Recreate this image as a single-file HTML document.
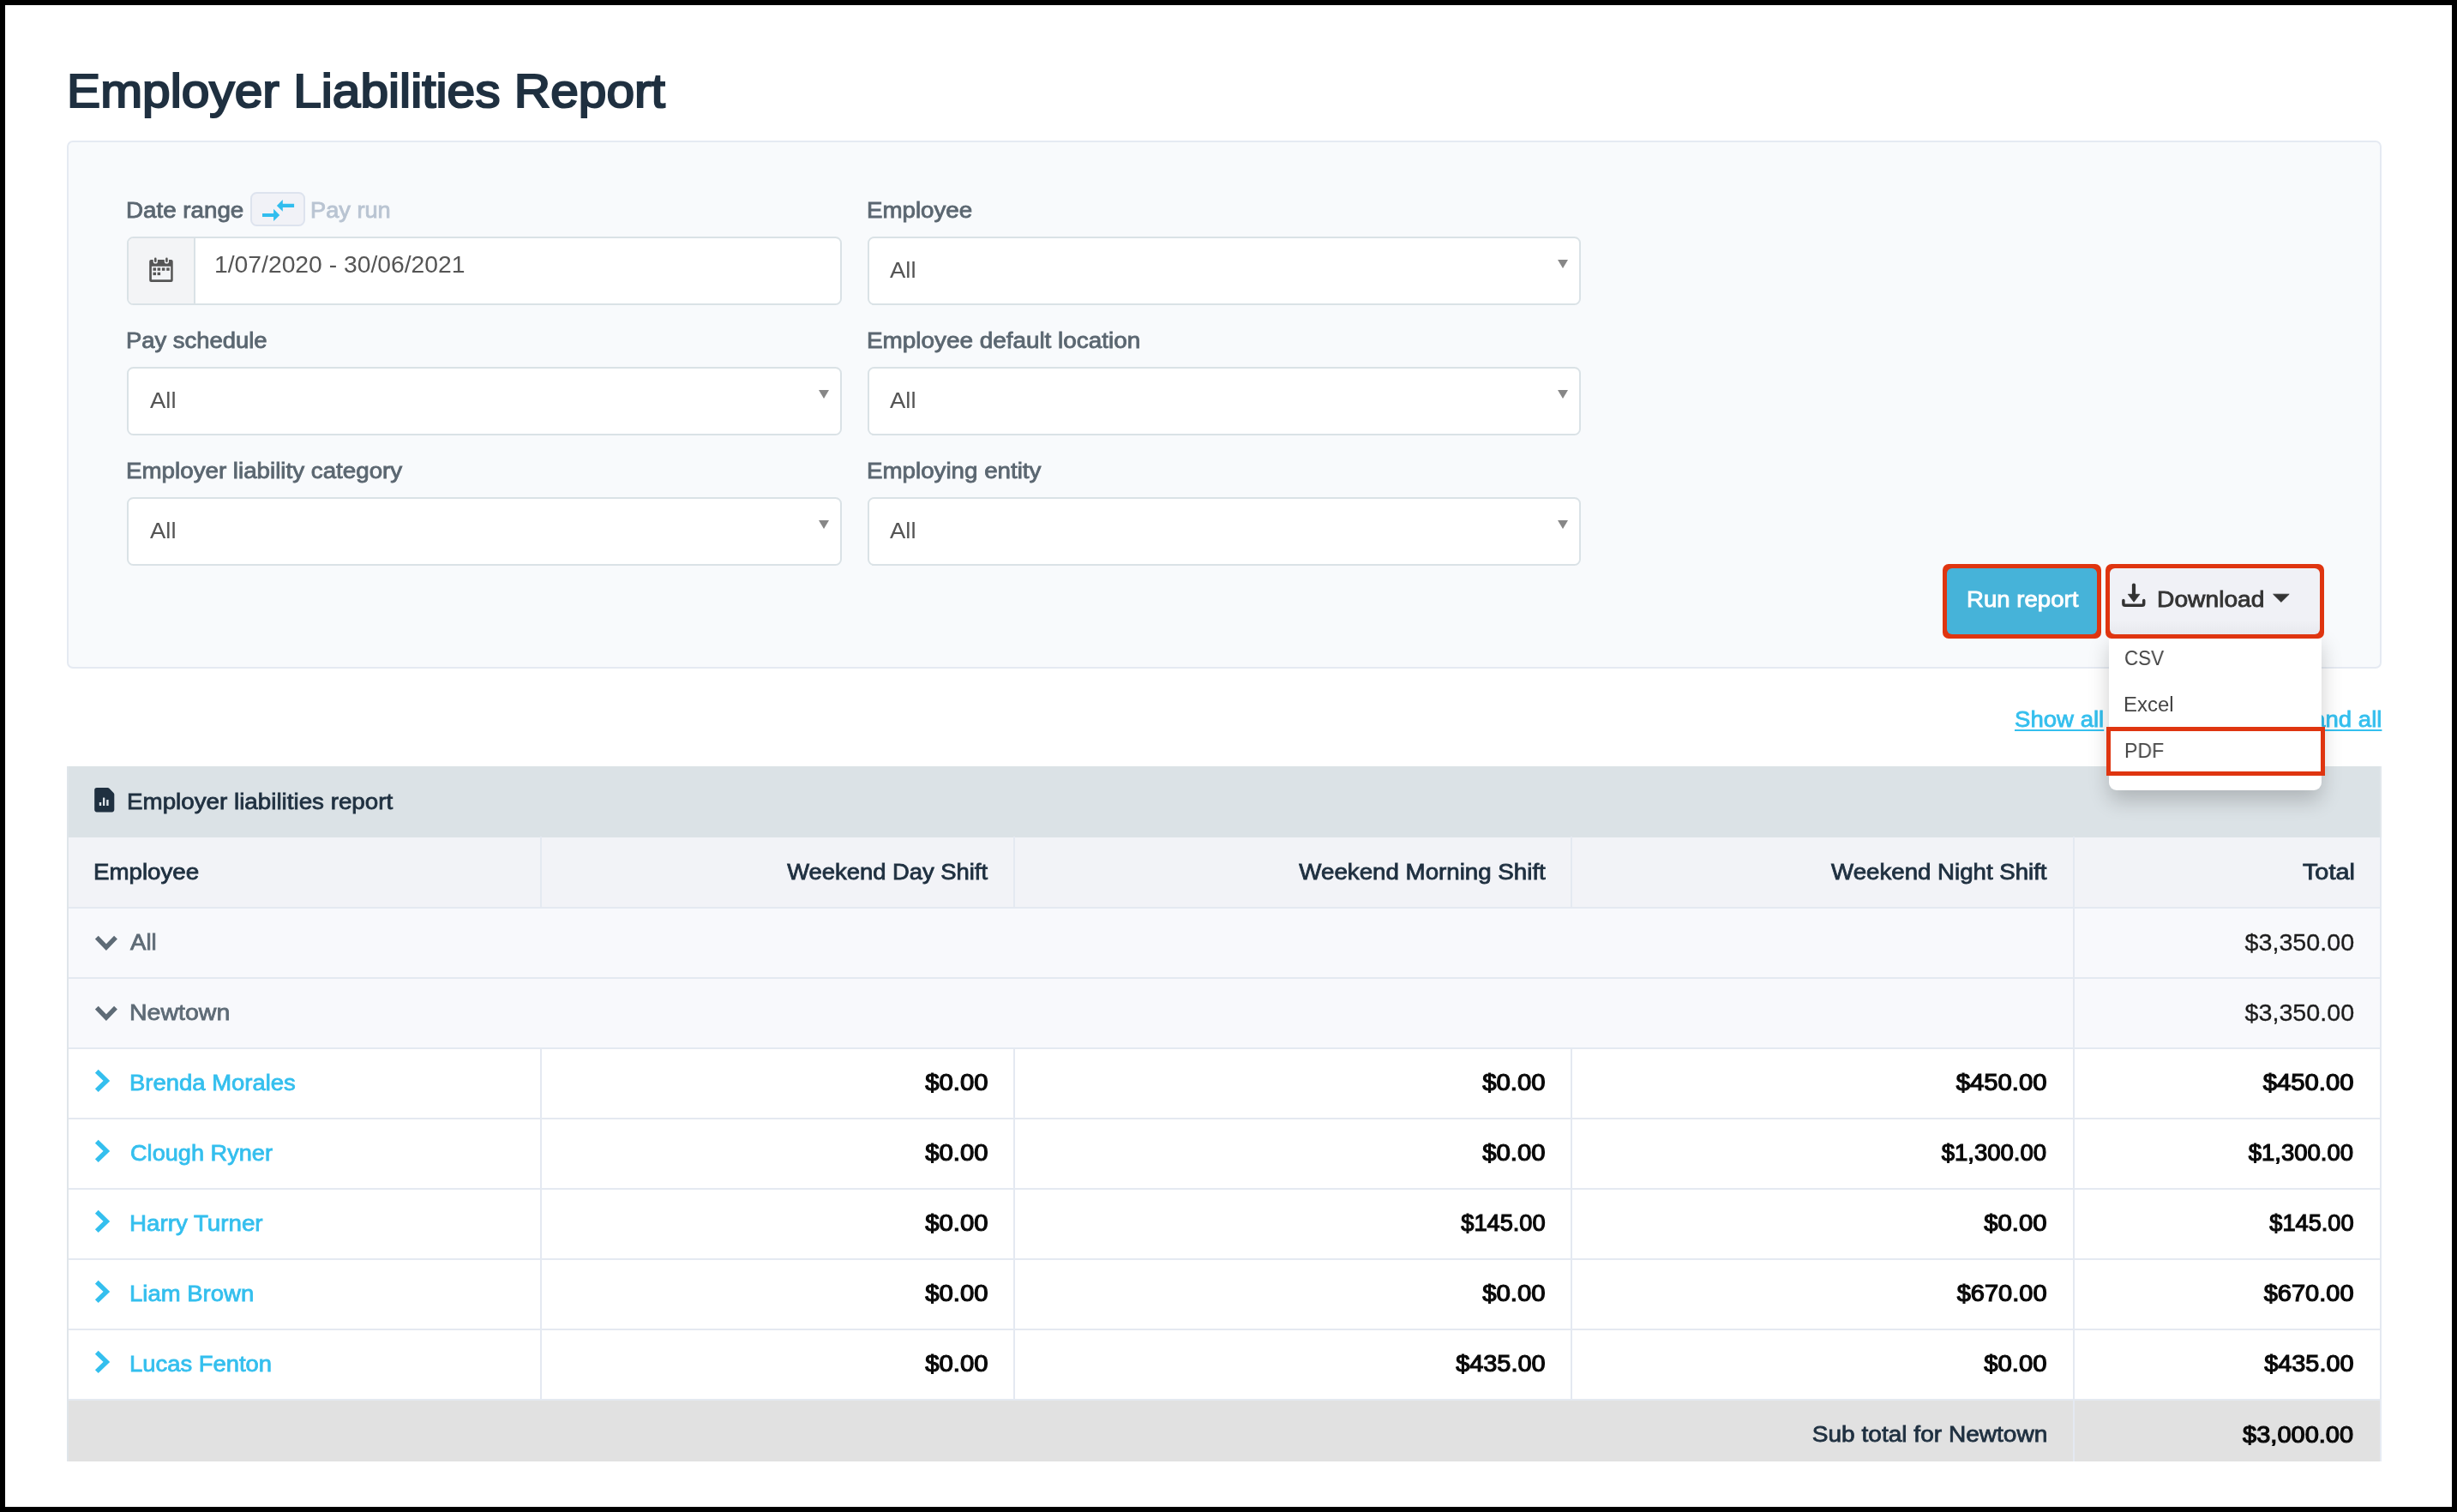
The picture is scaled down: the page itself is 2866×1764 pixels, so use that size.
<!DOCTYPE html>
<html><head><meta charset="utf-8"><title>Employer Liabilities Report</title>
<style>
*{box-sizing:border-box;margin:0;padding:0}
html,body{width:2866px;height:1764px;overflow:hidden;background:#fff}
body{position:relative;font-family:"Liberation Sans",sans-serif}
.a{position:absolute}
.t{position:absolute;white-space:nowrap;line-height:1;will-change:transform;font-family:"Liberation Sans",sans-serif}
#frame{position:absolute;left:0;top:0;width:2866px;height:1764px;border:6px solid #000;z-index:100}
.panel{left:78px;top:164px;width:2700px;height:616px;border:2px solid #e5eaf2;border-radius:7px;background:#f8fafc}
.inp{height:80px;border:2px solid #dae2e6;border-radius:7.5px;background:#fff}
.caret{width:0;height:0;border-left:6.2px solid transparent;border-right:6.2px solid transparent;border-top:10.4px solid #878787}
.hl{background:#e4e9f1}
</style></head><body>
<div id="frame"></div>
<div class="a panel"></div>

<!-- toggle -->
<div class="a" style="left:292px;top:224px;width:64px;height:40px;border:2px solid #dde3ee;border-radius:7.5px;background:#f1f2f7"></div>
<svg class="a" style="left:292px;top:224px" width="64" height="40" viewBox="292 224 64 40">
<path fill="#31bdee" d="M322.9 239.9 L329.8 232.9 V237.8 H343.1 V242 H329.8 V246.7 Z"/>
<path fill="#31bdee" d="M326.2 250.9 L319.1 243.8 V248.9 H306 V252.9 H319.1 V258.1 Z"/>
</svg>

<!-- date input -->
<div class="a inp" style="left:148px;top:276px;width:834px"></div>
<div class="a" style="left:150px;top:278px;width:78px;height:76px;background:#f3f4f6;border-right:2px solid #dae2e6;border-radius:5.5px 0 0 5.5px"></div>
<svg class="a" style="left:170px;top:296.6px" width="36" height="36" viewBox="170 296 36 36">
<g fill="#555">
<path d="M176.2 302.1 H199.7 Q201.7 302.1 201.7 304.1 V325.9 Q201.7 327.9 199.7 327.9 H176.2 Q174.2 327.9 174.2 325.9 V304.1 Q174.2 302.1 176.2 302.1 Z M176.9 309.8 V325.2 H199.2 V309.8 Z" fill-rule="evenodd"/>
<rect x="178.5" y="311.4" width="3.5" height="3.4"/><rect x="183.6" y="311.4" width="3.5" height="3.4"/><rect x="188.9" y="311.4" width="3.5" height="3.4"/><rect x="194.2" y="311.4" width="3.5" height="3.4"/>
<rect x="178.5" y="316.7" width="3.5" height="3.4"/><rect x="183.6" y="316.7" width="3.5" height="3.4"/>
</g>
<g fill="#f3f4f6"><rect x="178.7" y="300" width="5.2" height="6.6" rx="2.6"/><rect x="191.8" y="300" width="5.2" height="6.6" rx="2.6"/></g>
<g fill="#555"><rect x="180" y="299.6" width="2.6" height="5.4" rx="1.3"/><rect x="193.1" y="299.6" width="2.6" height="5.4" rx="1.3"/></g>
</svg>

<!-- selects -->
<div class="a inp" style="left:1012px;top:276px;width:832px"></div>
<div class="a inp" style="left:148px;top:428px;width:834px"></div>
<div class="a inp" style="left:1012px;top:428px;width:832px"></div>
<div class="a inp" style="left:148px;top:580px;width:834px"></div>
<div class="a inp" style="left:1012px;top:580px;width:832px"></div>
<div class="a caret" style="left:1816.8px;top:302.9px"></div>
<div class="a caret" style="left:954.6px;top:454.9px"></div>
<div class="a caret" style="left:1816.8px;top:454.9px"></div>
<div class="a caret" style="left:954.6px;top:606.9px"></div>
<div class="a caret" style="left:1816.8px;top:606.9px"></div>

<!-- buttons -->
<div class="a" style="left:2266px;top:658px;width:185px;height:87px;border-radius:7px;background:#df3510"></div>
<div class="a" style="left:2271px;top:663px;width:175px;height:77px;border-radius:6px;background:#46b3d9"></div>
<div class="a" style="left:2456px;top:658px;width:255px;height:87px;border-radius:7px;background:#df3510;z-index:12"></div>
<div class="a" style="left:2461px;top:663px;width:245px;height:77px;border-radius:6px;background:linear-gradient(#f0f1f6 78%,#e8e9ee);z-index:12"></div>
<svg class="a" style="left:2470px;top:676px;z-index:13" width="40" height="36" viewBox="2470 676 40 36">
<path d="M2476.9 700.4 V704.2 Q2476.9 706.3 2479 706.3 H2498.6 Q2500.7 706.3 2500.7 704.2 V700.4" fill="none" stroke="#333" stroke-width="3.5" stroke-linecap="round"/>
<path d="M2489 682.6 V695" fill="none" stroke="#333" stroke-width="4.2" stroke-linecap="round"/>
<path d="M2482.3 693.3 H2495.9 L2489.1 702.3 Z" fill="#333" stroke="#333" stroke-width="0.8" stroke-linejoin="round"/>
</svg>
<svg class="a" style="left:2648px;top:690px;z-index:13" width="26" height="16" viewBox="2648 690 26 16">
<path d="M2651.6 693.2 H2670.2 L2660.9 702.4 Z" fill="#333" stroke="#333" stroke-width="0.8" stroke-linejoin="round"/>
</svg>

<!-- dropdown -->
<div class="a" style="left:2460px;top:740px;width:248px;height:182px;background:#fff;border-radius:0 0 9px 9px;box-shadow:0 12px 24px rgba(0,0,0,.2);z-index:10"></div>
<div class="a" style="left:2457px;top:848px;width:255px;height:57px;border:5px solid #df3510;z-index:21"></div>

<!-- table -->
<div class="a" style="left:78px;top:894px;width:2700px;height:811px;background:#fff"></div>
<div class="a" style="left:78px;top:894px;width:2700px;height:83px;background:#dbe2e6"></div>
<div class="a" style="left:78px;top:977px;width:2700px;height:82px;background:#f2f3f7"></div>
<div class="a" style="left:78px;top:1059px;width:2700px;height:164px;background:#f8f9fc"></div>
<div class="a" style="left:78px;top:1632px;width:2700px;height:72.7px;background:#e1e1e1"></div>
<!-- horizontal lines -->
<div class="a hl" style="left:78px;top:1058px;width:2700px;height:2px"></div>
<div class="a hl" style="left:78px;top:1139.5px;width:2700px;height:2px"></div>
<div class="a hl" style="left:78px;top:1221.5px;width:2700px;height:2px"></div>
<div class="a hl" style="left:78px;top:1304px;width:2700px;height:2px"></div>
<div class="a hl" style="left:78px;top:1386px;width:2700px;height:2px"></div>
<div class="a hl" style="left:78px;top:1467.7px;width:2700px;height:2px"></div>
<div class="a hl" style="left:78px;top:1549.5px;width:2700px;height:2px"></div>
<!-- vertical lines -->
<div class="a hl" style="left:78px;top:976px;width:2px;height:656px"></div>
<div class="a hl" style="left:2776px;top:976px;width:2px;height:656px"></div>
<div class="a hl" style="left:629.7px;top:976px;width:2px;height:83px"></div>
<div class="a hl" style="left:1181.7px;top:976px;width:2px;height:83px"></div>
<div class="a hl" style="left:1832px;top:976px;width:2px;height:83px"></div>
<div class="a hl" style="left:2418px;top:976px;width:2px;height:656px"></div>
<div class="a hl" style="left:629.7px;top:1222px;width:2px;height:410px"></div>
<div class="a hl" style="left:1181.7px;top:1222px;width:2px;height:410px"></div>
<div class="a hl" style="left:1832px;top:1222px;width:2px;height:410px"></div>
<div class="a hl" style="left:78px;top:1632px;width:2700px;height:2px"></div>
<div class="a hl" style="left:2418px;top:1632px;width:2px;height:72.7px"></div>
<div class="a" style="left:78px;top:894px;width:2px;height:811px;background:#dfe5ea"></div>
<div class="a" style="left:2776px;top:1632px;width:2px;height:72.7px;background:#e6ebf3"></div>
<div class="a" style="left:2776px;top:894px;width:2px;height:83px;background:#e1e7ec"></div>

<!-- doc icon -->
<svg class="a" style="left:106px;top:915px" width="32" height="36" viewBox="106 915 32 36">
<path fill="#1f3040" d="M113 919 H125.6 Q126.6 919 127.4 919.8 L132.5 924.9 Q133.3 925.7 133.3 926.8 V944.6 Q133.3 947.4 130.5 947.4 H113 Q110.2 947.4 110.2 944.6 V921.8 Q110.2 919 113 919 Z"/>
<g fill="#dfe5ea"><rect x="115.8" y="936.1" width="2.4" height="4" rx=".4"/><rect x="120" y="930.5" width="2.3" height="9.6" rx=".4"/><rect x="124.2" y="933" width="2.4" height="7.1" rx=".4"/></g>
</svg>

<!-- chevrons -->
<svg class="a" style="left:106px;top:1085px" width="36" height="30" viewBox="106 1085 36 30"><polyline points="112.8,1093.7 123.9,1105.1 135,1093.7" fill="none" stroke="#5e6b76" stroke-width="5.4"/></svg>
<svg class="a" style="left:106px;top:1167px" width="36" height="30" viewBox="106 1085 36 30"><polyline points="112.8,1093.7 123.9,1105.1 135,1093.7" fill="none" stroke="#5e6b76" stroke-width="5.4"/></svg>
<svg class="a" style="left:106px;top:1244px" width="28" height="34" viewBox="106 1244 28 34"><polyline points="112.8,1249.8 124.3,1260.9 112.8,1272.1" fill="none" stroke="#34bfee" stroke-width="5.4"/></svg>
<svg class="a" style="left:106px;top:1326px" width="28" height="34" viewBox="106 1244 28 34"><polyline points="112.8,1249.8 124.3,1260.9 112.8,1272.1" fill="none" stroke="#34bfee" stroke-width="5.4"/></svg>
<svg class="a" style="left:106px;top:1408px" width="28" height="34" viewBox="106 1244 28 34"><polyline points="112.8,1249.8 124.3,1260.9 112.8,1272.1" fill="none" stroke="#34bfee" stroke-width="5.4"/></svg>
<svg class="a" style="left:106px;top:1490px" width="28" height="34" viewBox="106 1244 28 34"><polyline points="112.8,1249.8 124.3,1260.9 112.8,1272.1" fill="none" stroke="#34bfee" stroke-width="5.4"/></svg>
<svg class="a" style="left:106px;top:1572px" width="28" height="34" viewBox="106 1244 28 34"><polyline points="112.8,1249.8 124.3,1260.9 112.8,1272.1" fill="none" stroke="#34bfee" stroke-width="5.4"/></svg>

<span class="t" id="title" style="font-size:56px;color:#1f3040;top:78.20px;-webkit-text-stroke:2.2px #1f3040;left:78.14px;transform-origin:0 0;transform:scaleX(1.0478);">Employer Liabilities Report</span>
<span class="t" id="l_date" style="font-size:26px;color:#5b6771;top:232.39px;-webkit-text-stroke:0.85px #5b6771;left:147.18px;transform-origin:0 0;transform:scaleX(1.0672);">Date range</span>
<span class="t" id="l_payrun" style="font-size:26px;color:#b9c4d2;top:232.39px;-webkit-text-stroke:0.85px #b9c4d2;left:362.41px;transform-origin:0 0;transform:scaleX(1.0457);">Pay run</span>
<span class="t" id="l_emp" style="font-size:26px;color:#5b6771;top:232.39px;-webkit-text-stroke:0.85px #5b6771;left:1010.68px;transform-origin:0 0;transform:scaleX(1.0646);">Employee</span>
<span class="t" id="l_sched" style="font-size:26px;color:#5b6771;top:384.19px;-webkit-text-stroke:0.85px #5b6771;left:147.20px;transform-origin:0 0;transform:scaleX(1.0542);">Pay schedule</span>
<span class="t" id="l_loc" style="font-size:26px;color:#5b6771;top:384.19px;-webkit-text-stroke:0.85px #5b6771;left:1010.67px;transform-origin:0 0;transform:scaleX(1.0720);">Employee default location</span>
<span class="t" id="l_cat" style="font-size:26px;color:#5b6771;top:535.99px;-webkit-text-stroke:0.85px #5b6771;left:147.18px;transform-origin:0 0;transform:scaleX(1.0669);">Employer liability category</span>
<span class="t" id="l_ent" style="font-size:26px;color:#5b6771;top:535.99px;-webkit-text-stroke:0.85px #5b6771;left:1010.68px;transform-origin:0 0;transform:scaleX(1.0663);">Employing entity</span>
<span class="t" id="v_date" style="font-size:27px;color:#555;top:295.64px;left:250.15px;transform-origin:0 0;transform:scaleX(1.0476);">1/07/2020 - 30/06/2021</span>
<span class="t" id="v_all1" style="font-size:26px;color:#555;top:302.29px;left:1038.25px;transform-origin:0 0;transform:scaleX(1.0547);">All</span>
<span class="t" id="v_all2" style="font-size:26px;color:#555;top:454.29px;left:174.85px;transform-origin:0 0;transform:scaleX(1.0547);">All</span>
<span class="t" id="v_all3" style="font-size:26px;color:#555;top:454.29px;left:1038.25px;transform-origin:0 0;transform:scaleX(1.0547);">All</span>
<span class="t" id="v_all4" style="font-size:26px;color:#555;top:606.29px;left:174.85px;transform-origin:0 0;transform:scaleX(1.0547);">All</span>
<span class="t" id="v_all5" style="font-size:26px;color:#555;top:606.29px;left:1038.25px;transform-origin:0 0;transform:scaleX(1.0547);">All</span>
<span class="t" id="b_run" style="font-size:26px;color:#fff;top:686.29px;-webkit-text-stroke:0.85px #fff;left:2294.39px;transform-origin:0 0;transform:scaleX(1.0612);">Run report</span>
<span class="t" id="b_dl" style="font-size:26px;color:#333;top:685.99px;-webkit-text-stroke:0.85px #333;left:2515.75px;transform-origin:0 0;transform:scaleX(1.0854);z-index:13;">Download</span>
<span class="t" id="m_csv" style="font-size:23.5px;color:#444;top:757.21px;left:2478.27px;transform-origin:0 0;transform:scaleX(0.9504);z-index:20;">CSV</span>
<span class="t" id="m_xls" style="font-size:23.5px;color:#444;top:811.41px;left:2477.44px;transform-origin:0 0;transform:scaleX(1.0191);z-index:20;">Excel</span>
<span class="t" id="m_pdf" style="font-size:23.5px;color:#444;top:865.01px;left:2477.51px;transform-origin:0 0;transform:scaleX(0.9812);z-index:20;">PDF</span>
<span class="t" id="a_show" style="font-size:26px;color:#34bfee;top:825.89px;-webkit-text-stroke:0.8px #34bfee;left:2350.17px;transform-origin:0 0;transform:scaleX(1.0607);text-decoration:underline;text-decoration-thickness:2px;text-underline-offset:2.6px;">Show all</span>
<span class="t" id="a_exp" style="font-size:26px;color:#34bfee;top:825.89px;-webkit-text-stroke:0.8px #34bfee;right:88.00px;transform-origin:100% 0;transform:scaleX(1.0607);text-decoration:underline;text-decoration-thickness:2px;text-underline-offset:2.6px;">Expand all</span>
<span class="t" id="t_title" style="font-size:26px;color:#1f3040;top:922.29px;-webkit-text-stroke:0.8px #1f3040;left:148.05px;transform-origin:0 0;transform:scaleX(1.0681);">Employer liabilities report</span>
<span class="t" id="h_emp" style="font-size:26px;color:#1f3040;top:1003.69px;-webkit-text-stroke:0.85px #1f3040;left:108.98px;transform-origin:0 0;transform:scaleX(1.0655);">Employee</span>
<span class="t" id="h_day" style="font-size:26px;color:#1f3040;top:1003.69px;-webkit-text-stroke:0.85px #1f3040;right:1714.05px;transform-origin:100% 0;transform:scaleX(1.0528);">Weekend Day Shift</span>
<span class="t" id="h_morn" style="font-size:26px;color:#1f3040;top:1003.69px;-webkit-text-stroke:0.85px #1f3040;right:1063.25px;transform-origin:100% 0;transform:scaleX(1.0654);">Weekend Morning Shift</span>
<span class="t" id="h_night" style="font-size:26px;color:#1f3040;top:1003.69px;-webkit-text-stroke:0.85px #1f3040;right:478.85px;transform-origin:100% 0;transform:scaleX(1.0629);">Weekend Night Shift</span>
<span class="t" id="h_tot" style="font-size:26px;color:#1f3040;top:1003.69px;-webkit-text-stroke:0.85px #1f3040;right:119.34px;transform-origin:100% 0;transform:scaleX(1.1113);">Total</span>
<span class="t" id="r_all" style="font-size:26px;color:#5e6b76;top:1085.59px;-webkit-text-stroke:0.8px #5e6b76;left:151.87px;transform-origin:0 0;transform:scaleX(1.0603);">All</span>
<span class="t" id="r_new" style="font-size:26px;color:#5e6b76;top:1167.59px;-webkit-text-stroke:0.8px #5e6b76;left:150.60px;transform-origin:0 0;transform:scaleX(1.0970);">Newtown</span>
<span class="t" id="r_all_t" style="font-size:27px;color:#1c1c1c;top:1086.54px;-webkit-text-stroke:0.3px #1c1c1c;right:119.84px;transform-origin:100% 0;transform:scaleX(1.0623);">$3,350.00</span>
<span class="t" id="r_new_t" style="font-size:27px;color:#1c1c1c;top:1168.54px;-webkit-text-stroke:0.3px #1c1c1c;right:119.84px;transform-origin:100% 0;transform:scaleX(1.0623);">$3,350.00</span>
<span class="t" id="n0" style="font-size:26px;color:#34bfee;top:1250.49px;-webkit-text-stroke:0.8px #34bfee;left:150.67px;transform-origin:0 0;transform:scaleX(1.0559);">Brenda Morales</span>
<span class="t" id="v0_0" style="font-size:27px;color:#0a0a0a;top:1249.64px;-webkit-text-stroke:1.2px #0a0a0a;right:1713.71px;transform-origin:100% 0;transform:scaleX(1.0855);">$0.00</span>
<span class="t" id="v0_1" style="font-size:27px;color:#0a0a0a;top:1249.64px;-webkit-text-stroke:1.2px #0a0a0a;right:1063.31px;transform-origin:100% 0;transform:scaleX(1.0855);">$0.00</span>
<span class="t" id="v0_2" style="font-size:27px;color:#0a0a0a;top:1249.64px;-webkit-text-stroke:1.2px #0a0a0a;right:478.51px;transform-origin:100% 0;transform:scaleX(1.0855);">$450.00</span>
<span class="t" id="v0_3" style="font-size:27px;color:#0a0a0a;top:1249.64px;-webkit-text-stroke:1.2px #0a0a0a;right:120.51px;transform-origin:100% 0;transform:scaleX(1.0855);">$450.00</span>
<span class="t" id="n1" style="font-size:26px;color:#34bfee;top:1332.49px;-webkit-text-stroke:0.8px #34bfee;left:151.54px;transform-origin:0 0;transform:scaleX(1.0441);">Clough Ryner</span>
<span class="t" id="v1_0" style="font-size:27px;color:#0a0a0a;top:1331.64px;-webkit-text-stroke:1.2px #0a0a0a;right:1713.71px;transform-origin:100% 0;transform:scaleX(1.0855);">$0.00</span>
<span class="t" id="v1_1" style="font-size:27px;color:#0a0a0a;top:1331.64px;-webkit-text-stroke:1.2px #0a0a0a;right:1063.31px;transform-origin:100% 0;transform:scaleX(1.0855);">$0.00</span>
<span class="t" id="v1_2" style="font-size:27px;color:#0a0a0a;top:1331.64px;-webkit-text-stroke:1.2px #0a0a0a;right:478.54px;transform-origin:100% 0;transform:scaleX(1.0193);">$1,300.00</span>
<span class="t" id="v1_3" style="font-size:27px;color:#0a0a0a;top:1331.64px;-webkit-text-stroke:1.2px #0a0a0a;right:120.54px;transform-origin:100% 0;transform:scaleX(1.0193);">$1,300.00</span>
<span class="t" id="n2" style="font-size:26px;color:#34bfee;top:1414.49px;-webkit-text-stroke:0.8px #34bfee;left:150.65px;transform-origin:0 0;transform:scaleX(1.0662);">Harry Turner</span>
<span class="t" id="v2_0" style="font-size:27px;color:#0a0a0a;top:1413.64px;-webkit-text-stroke:1.2px #0a0a0a;right:1713.71px;transform-origin:100% 0;transform:scaleX(1.0855);">$0.00</span>
<span class="t" id="v2_1" style="font-size:27px;color:#0a0a0a;top:1413.64px;-webkit-text-stroke:1.2px #0a0a0a;right:1063.34px;transform-origin:100% 0;transform:scaleX(1.0075);">$145.00</span>
<span class="t" id="v2_2" style="font-size:27px;color:#0a0a0a;top:1413.64px;-webkit-text-stroke:1.2px #0a0a0a;right:478.51px;transform-origin:100% 0;transform:scaleX(1.0855);">$0.00</span>
<span class="t" id="v2_3" style="font-size:27px;color:#0a0a0a;top:1413.64px;-webkit-text-stroke:1.2px #0a0a0a;right:120.54px;transform-origin:100% 0;transform:scaleX(1.0075);">$145.00</span>
<span class="t" id="n3" style="font-size:26px;color:#34bfee;top:1496.49px;-webkit-text-stroke:0.8px #34bfee;left:150.67px;transform-origin:0 0;transform:scaleX(1.0576);">Liam Brown</span>
<span class="t" id="v3_0" style="font-size:27px;color:#0a0a0a;top:1495.64px;-webkit-text-stroke:1.2px #0a0a0a;right:1713.71px;transform-origin:100% 0;transform:scaleX(1.0855);">$0.00</span>
<span class="t" id="v3_1" style="font-size:27px;color:#0a0a0a;top:1495.64px;-webkit-text-stroke:1.2px #0a0a0a;right:1063.31px;transform-origin:100% 0;transform:scaleX(1.0855);">$0.00</span>
<span class="t" id="v3_2" style="font-size:27px;color:#0a0a0a;top:1495.64px;-webkit-text-stroke:1.2px #0a0a0a;right:478.51px;transform-origin:100% 0;transform:scaleX(1.0753);">$670.00</span>
<span class="t" id="v3_3" style="font-size:27px;color:#0a0a0a;top:1495.64px;-webkit-text-stroke:1.2px #0a0a0a;right:120.51px;transform-origin:100% 0;transform:scaleX(1.0753);">$670.00</span>
<span class="t" id="n4" style="font-size:26px;color:#34bfee;top:1578.49px;-webkit-text-stroke:0.8px #34bfee;left:150.67px;transform-origin:0 0;transform:scaleX(1.0534);">Lucas Fenton</span>
<span class="t" id="v4_0" style="font-size:27px;color:#0a0a0a;top:1577.64px;-webkit-text-stroke:1.2px #0a0a0a;right:1713.71px;transform-origin:100% 0;transform:scaleX(1.0855);">$0.00</span>
<span class="t" id="v4_1" style="font-size:27px;color:#0a0a0a;top:1577.64px;-webkit-text-stroke:1.2px #0a0a0a;right:1063.31px;transform-origin:100% 0;transform:scaleX(1.0701);">$435.00</span>
<span class="t" id="v4_2" style="font-size:27px;color:#0a0a0a;top:1577.64px;-webkit-text-stroke:1.2px #0a0a0a;right:478.51px;transform-origin:100% 0;transform:scaleX(1.0855);">$0.00</span>
<span class="t" id="v4_3" style="font-size:27px;color:#0a0a0a;top:1577.64px;-webkit-text-stroke:1.2px #0a0a0a;right:120.51px;transform-origin:100% 0;transform:scaleX(1.0701);">$435.00</span>
<span class="t" id="s_lbl" style="font-size:26px;color:#1f3040;top:1660.19px;-webkit-text-stroke:0.8px #1f3040;right:477.71px;transform-origin:100% 0;transform:scaleX(1.0797);">Sub total for Newtown</span>
<span class="t" id="s_val" style="font-size:27px;color:#0a0a0a;top:1660.54px;-webkit-text-stroke:1.2px #0a0a0a;right:120.51px;transform-origin:100% 0;transform:scaleX(1.0743);">$3,000.00</span>
</body></html>
